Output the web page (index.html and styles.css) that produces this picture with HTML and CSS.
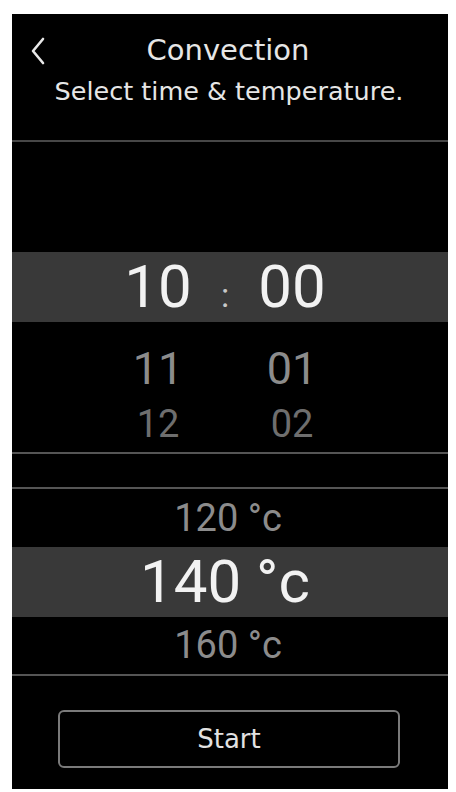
FILE: index.html
```html
<!DOCTYPE html>
<html>
<head>
<meta charset="utf-8">
<link rel="stylesheet" href="styles.css">
</head>
<body>
<div class="screen">
  <header class="header">
    <div class="titlebar">
      <svg class="back" width="16" height="28" viewBox="0 0 16 28"><path d="M13 2 L3 14 L13 26" fill="none" stroke="#e8e8e8" stroke-width="2.6" stroke-linecap="round" stroke-linejoin="round"/></svg>
      <div class="title">Convection</div>
      <div></div>
    </div>
    <div class="subtitle">Select time &amp; temperature.</div>
  </header>

  <section class="time">
    <div class="tspacer"></div>
    <div class="trow tband">
      <span class="tcell">10</span><span class="tcolon">:</span><span class="tcell">00</span>
    </div>
    <div class="trow t1">
      <span class="tcell">11</span><span class="tsep"></span><span class="tcell">01</span>
    </div>
    <div class="trow t2">
      <span class="tcell">12</span><span class="tsep"></span><span class="tcell">02</span>
    </div>
  </section>

  <div class="gap"></div>

  <section class="temp">
    <div class="prow p1">120 <span class="deg">°c</span></div>
    <div class="prow pband">140 <span class="deg">°c</span></div>
    <div class="prow p2">160 <span class="deg">°c</span></div>
  </section>

  <footer class="footer">
    <div class="start">Start</div>
  </footer>
</div>
</body>
</html>
```

FILE: styles.css
```css
html, body {
  margin: 0;
  padding: 0;
  background: #ffffff;
}
.screen {
  margin: 14px 8px 3px 12px;
  width: 436px;
  height: 775px;
  background: #000;
  display: flex;
  flex-direction: column;
  overflow: hidden;
}
.header {
  border-bottom: 2px solid #474747;
  padding-top: 18px;
  height: 108px;
  font-family: "DejaVu Sans", sans-serif;
  color: #e6e6e6;
}
.titlebar {
  display: grid;
  grid-template-columns: 1fr auto 1fr;
  align-items: center;
  height: 36px;
}
.back {
  margin-left: 18px;
  margin-top: 2px;
}
.title {
  font-size: 29px;
  line-height: 36px;
  margin-left: -4px;
}
.subtitle {
  margin-top: 8px;
  font-size: 25.5px;
  line-height: 30px;
  text-align: center;
  margin-left: -2px;
}
.time {
  height: 310px;
  border-bottom: 2px solid #555;
  font-family: Roboto, sans-serif;
}
.tspacer {
  height: 110px;
}
.trow {
  display: flex;
  align-items: baseline;
  padding-left: 96px;
}
.tcell {
  width: 100px;
  text-align: center;
}
.tcolon, .tsep {
  width: 34px;
  text-align: center;
}
.tband {
  height: 70px;
  background: #393939;
  color: #f2f2f2;
  font-size: 60px;
  line-height: 70px;
}
.tcolon {
  font-size: 34px;
  color: #c8c8c8;
}
.t1 {
  margin-top: 18px;
  height: 58px;
  font-size: 45px;
  line-height: 58px;
  color: #8c8c8c;
}
.t2 {
  height: 52px;
  font-size: 38px;
  line-height: 52px;
  color: #6e6e6e;
}
.gap {
  height: 33px;
}
.temp {
  border-top: 2px solid #555;
  border-bottom: 2px solid #555;
  font-family: Roboto, sans-serif;
  text-align: center;
}
.prow {
  padding-right: 4px;
}
.p1 {
  height: 58px;
  line-height: 58px;
  font-size: 38px;
  color: #8c8c8c;
}
.pband {
  height: 70px;
  line-height: 70px;
  font-size: 60px;
  background: #393939;
  color: #f2f2f2;
  padding-right: 10px;
}
.p2 {
  height: 57px;
  line-height: 57px;
  font-size: 38px;
  color: #8c8c8c;
}
.footer {
  flex: 1;
  padding: 34px 48px 0 46px;
}
.start {
  height: 54px;
  border: 2px solid #7a7a7a;
  border-radius: 6px;
  display: flex;
  align-items: center;
  justify-content: center;
  font-family: "DejaVu Sans", sans-serif;
  font-size: 26px;
  color: #e2e2e2;
}
```
